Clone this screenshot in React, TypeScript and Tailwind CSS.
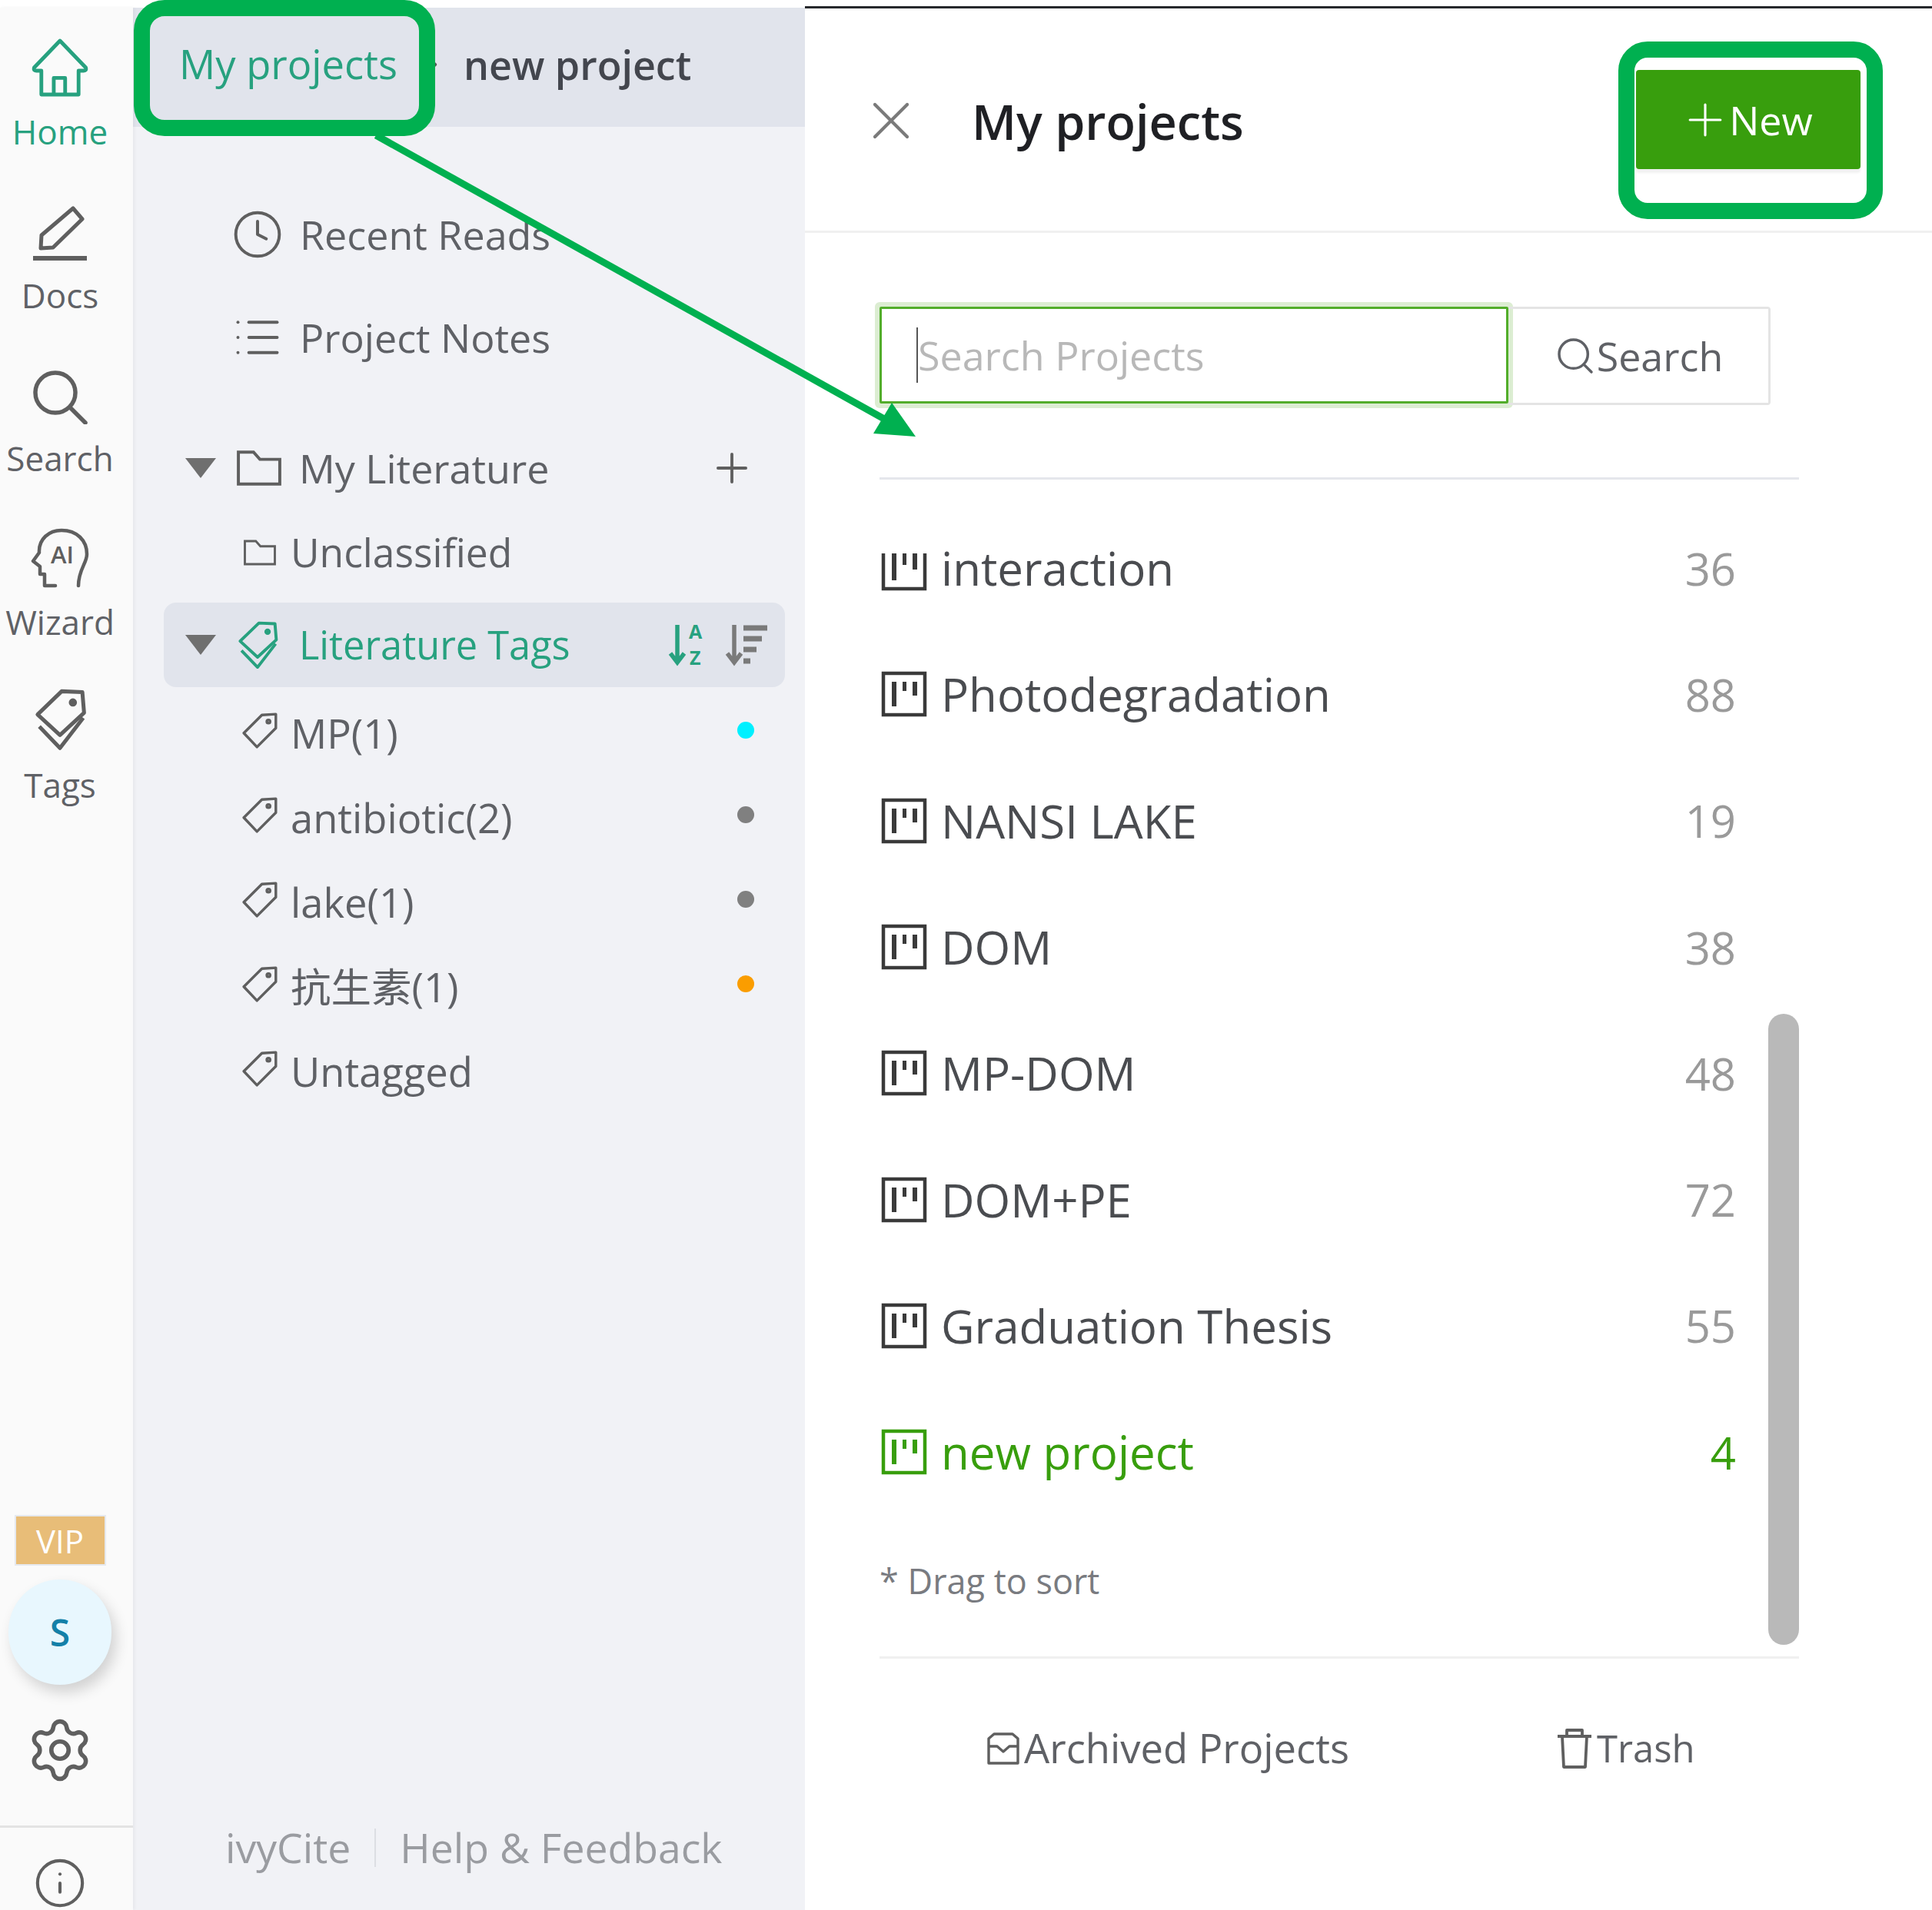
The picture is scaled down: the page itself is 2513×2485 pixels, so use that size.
import { ChevronRight, Clock, Info, List, Plus, Search, Settings, X } from "lucide-react";

const GREEN = "#27a17f";

const tags = [
  { name: "MP(1)", dot: "bg-[#00f0ff]" },
  { name: "antibiotic(2)", dot: "bg-[#808080]" },
  { name: "lake(1)", dot: "bg-[#808080]" },
  { name: "抗生素(1)", dot: "bg-[#fa9d00]" },
  { name: "Untagged", dot: "" },
];

const projects = [
  { name: "interaction", count: 36 },
  { name: "Photodegradation", count: 88 },
  { name: "NANSI LAKE", count: 19 },
  { name: "DOM", count: 38 },
  { name: "MP-DOM", count: 48 },
  { name: "DOM+PE", count: 72 },
  { name: "Graduation Thesis", count: 55 },
  { name: "new project", count: 4, active: true },
];

function HomeIcon() {
  return (
    <svg width="76" height="78" viewBox="0 0 56 58" fill="none" stroke={GREEN} strokeWidth="3.6" strokeLinejoin="round">
      <path d="M28 3 L53 29 Q54 32 51 32 H46 V55 H10 V32 H5 Q2 32 3 29 Z" />
      <path d="M22 55 V39 H33 V55" />
    </svg>
  );
}

function DocsIcon() {
  return (
    <svg width="72" height="72" viewBox="0 0 72 72" fill="none" stroke="#5f5f5f" strokeWidth="5" strokeLinejoin="round">
      <path d="M53 3 L65 17 L27 54 L11 55 L12 38 Z" />
      <path d="M1 68 H71" strokeWidth="6" />
    </svg>
  );
}

function SearchIcon() {
  return (
    <svg width="72" height="72" viewBox="0 0 72 72" fill="none" stroke="#5f5f5f" strokeWidth="5.5" strokeLinecap="round">
      <circle cx="30" cy="31" r="26" />
      <path d="M50 51 L69 70" />
    </svg>
  );
}

function WizardIcon() {
  return (
    <svg width="76" height="78" viewBox="0 0 76 78" fill="none" stroke="#5f5f5f" strokeWidth="4.5" strokeLinejoin="round" strokeLinecap="round">
      <path d="M32 75 H18 V60 H12 V50 L3 43 L11 32 C10 14 24 3 40 3 C60 3 73 16 73 34 C73 46 62 54 62 75" />
      <text x="26" y="46" fontSize="31" fontWeight="600" fill="#5f5f5f" stroke="none">AI</text>
    </svg>
  );
}

function DoubleTag({ color, size = 72 }: { color: string; size?: number }) {
  return (
    <svg width={size} height={size * 1.12} viewBox="0 0 64 72" fill="none" stroke={color} strokeWidth="4.5" strokeLinejoin="round">
      <path d="M34 3 L58 4 L60 28 L32 54 L6 30 Z" />
      <circle cx="47" cy="16" r="2.5" fill={color} />
      <path d="M8 44 L32 69 L59 34" />
    </svg>
  );
}

function TagIcon() {
  return (
    <svg width="47" height="47" viewBox="0 0 44 44" fill="none" stroke="#5f5f5f" strokeWidth="3.2" strokeLinejoin="round">
      <path d="M24 3 L41 2 L41 19 L18 42 L2 25 Z" />
      <circle cx="32" cy="11" r="2" />
    </svg>
  );
}

function FolderIcon({ w, h }: { w: number; h: number }) {
  return (
    <svg width={w} height={h} viewBox="0 0 56 44" fill="none" stroke="#5f5f5f" strokeWidth="3.8" strokeLinejoin="miter">
      <path d="M2 42 V2 H21 L29 11 H54 V42 Z" />
    </svg>
  );
}

function Caret() {
  return (
    <svg width="40" height="28" viewBox="0 0 40 28" fill="#6f6f6f">
      <path d="M0 1 H40 L20 27 Z" />
    </svg>
  );
}

function ProjectIcon({ active, clipped }: { active?: boolean; clipped?: boolean }) {
  const color = active ? "#389e0d" : "#3a3a3a";
  return (
    <svg width="60" height="60" viewBox="0 0 60 60" fill="none" stroke={color} strokeWidth="4.5" strokeLinejoin="miter">
      {clipped ? <path d="M3 11 V57 H57 V11" /> : <rect x="3" y="3" width="54" height="54" />}
      <g stroke="none" fill={color}>
        <rect x="14" y={clipped ? 11 : 14} width="6" height={clipped ? 35 : 32} />
        <rect x="28" y={clipped ? 11 : 14} width="5" height={clipped ? 15 : 12} />
        <rect x="41" y={clipped ? 11 : 14} width="6" height={clipped ? 21 : 18} />
      </g>
    </svg>
  );
}

function SortAz() {
  return (
    <svg width="52" height="70" viewBox="0 -6 52 70" fill="none" stroke={GREEN}>
      <path d="M12 3 V50 M3 40 L12 52 L21 40" strokeWidth="5.5" />
      <text x="27" y="21" fontSize="25" fontWeight="700" fill={GREEN} stroke="none">A</text>
      <text x="28" y="55" fontSize="25" fontWeight="700" fill={GREEN} stroke="none">Z</text>
    </svg>
  );
}

function SortBars() {
  return (
    <svg width="56" height="58" viewBox="0 0 56 58" fill="none" stroke="#7a7a7a">
      <path d="M12 3 V50 M3 40 L12 52 L21 40" strokeWidth="5.5" />
      <path d="M24 7 H55 M24 21 H48 M24 35 H41 M24 50 H33" strokeWidth="7" />
    </svg>
  );
}

function ArchiveIcon() {
  return (
    <svg width="42" height="42" viewBox="0 0 42 42" fill="none" stroke="#5f5f5f" strokeWidth="3.4" strokeLinejoin="round">
      <path d="M2 40 V8 L9 2 H33 L40 8 V40 Z" />
      <path d="M2 18 H13 L21 25 L29 18 H40" />
    </svg>
  );
}

function TrashIcon() {
  return (
    <svg width="46" height="54" viewBox="0 0 46 54" fill="none" stroke="#5f5f5f" strokeWidth="3.8" strokeLinejoin="round">
      <path d="M7 11 L9 51 H37 L39 11" />
      <path d="M1 11 H45" />
      <path d="M13 11 V3 H33 V11" />
    </svg>
  );
}

function RailItem({ icon, label, active }: { icon: React.ReactNode; label: string; active?: boolean }) {
  return (
    <div className={`h-[212.5px] flex flex-col items-center pr-[17px] ${active ? "text-[#27a17f]" : "text-[#5f6166]"}`}>
      <div className="h-[92px] flex items-end justify-center">{icon}</div>
      <span className="mt-[14px] text-[44px] leading-[60px]">{label}</span>
    </div>
  );
}

export default function App() {
  return (
    <div className="relative flex w-[2513px] h-[2485px] overflow-hidden bg-white font-[family-name:'Open_Sans','Noto_Sans_CJK_SC',sans-serif]">
      {/* Icon rail */}
      <aside className="w-[173px] mt-[10px] shrink-0 bg-[#fafafa] flex flex-col shadow-[2px_0_4px_rgba(0,0,0,0.05)] z-10">
        <div className="pt-[25px]">
          <RailItem active icon={<HomeIcon />} label="Home" />
          <RailItem icon={<DocsIcon />} label="Docs" />
          <RailItem icon={<SearchIcon />} label="Search" />
          <RailItem icon={<WizardIcon />} label="Wizard" />
          <RailItem icon={<DoubleTag color="#5f5f5f" />} label="Tags" />
        </div>
        <div className="mt-auto flex flex-col items-center">
          <div className="mr-[17px] w-[119px] h-[66px] bg-[#e8bd78] border-2 border-[#e6e9ee] flex items-center justify-center text-[42px] text-white">
            VIP
          </div>
          <div className="mr-[17px] mt-[18px] w-[134px] h-[137px] rounded-full bg-[#e8f7fe] shadow-[6px_10px_18px_rgba(0,0,0,0.16)] flex items-center justify-center text-[48px] font-semibold text-[#1480a8]">
            S
          </div>
          <Settings className="mr-[17px] mt-[40px] text-[#5f5f5f]" size={90} strokeWidth={1.5} />
          <div className="mt-[53px] w-full border-t-[3px] border-[#e3e3e3] h-[110px] flex items-start justify-center pt-[37px] pr-[17px]">
            <Info className="text-[#5f5f5f]" size={70} strokeWidth={1.4} />
          </div>
        </div>
      </aside>

      {/* Middle panel */}
      <section className="w-[874px] mt-[10px] shrink-0 bg-[#f1f2f6] flex flex-col">
        <div className="h-[155px] bg-[#e1e4ec] flex items-center text-[52.5px] pl-[60px] pb-[8px]">
          <span className="text-[#27a17f]">My projects</span>
          <ChevronRight size={28} strokeWidth={3} className="ml-[32px] text-[#555]" />
          <span className="ml-[26px] text-[52px] text-[#43464e] font-semibold">new project</span>
        </div>

        <div className="mt-[73px] text-[#5f6166] text-[52px]">
          <div className="h-[134px] flex items-center pl-[128px] gap-[21px]">
            <Clock size={68} strokeWidth={1.4} className="text-[#5f5f5f]" />
            <span>Recent Reads</span>
          </div>
          <div className="h-[134px] flex items-center pl-[128px] gap-[21px]">
            <List size={68} strokeWidth={1.4} className="text-[#5f5f5f]" />
            <span>Project Notes</span>
          </div>
          <div className="mt-[48px] h-[110px] flex items-center pl-[68px] pr-[64px]">
            <Caret />
            <span className="ml-[27px]"><FolderIcon w={58} h={46} /></span>
            <span className="ml-[23px]">My Literature</span>
            <Plus size={62} strokeWidth={1.5} className="ml-auto text-[#5f5f5f]" />
          </div>
          <div className="h-[110px] flex items-center pl-[144px] gap-[19px]">
            <FolderIcon w={42} h={34} />
            <span className="text-[51.5px]">Unclassified</span>
          </div>
          <div className="mt-[10px] ml-[40px] w-[808px] h-[110px] rounded-[16px] bg-[#e1e4ec] flex items-center pl-[28px] pr-[22px] text-[#27a17f]">
            <Caret />
            <span className="ml-[26px]"><DoubleTag color={GREEN} size={56} /></span>
            <span className="ml-[26px] text-[50.5px]">Literature Tags</span>
            <span className="ml-auto"><SortAz /></span>
            <span className="ml-[22px]"><SortBars /></span>
          </div>
          <div className="mt-[5px]">
            {tags.map((tag) => (
              <div key={tag.name} className="h-[110px] flex items-center pl-[142px] pr-[66px]">
                <span className="-mt-[8px]"><TagIcon /></span>
                <span className="ml-[16px] text-[52.5px]">{tag.name}</span>
                {tag.dot && <span className={`ml-auto -mt-[8px] w-[22px] h-[22px] rounded-full ${tag.dot}`} />}
              </div>
            ))}
          </div>
        </div>

        <div className="mt-auto mb-[41px] pl-[120px] flex items-center text-[53.5px] text-[#9a9ca1]">
          <span>ivyCite</span>
          <span className="mx-[31px] h-[50px] border-l-2 border-[#dcdee3]" />
          <span>Help &amp; Feedback</span>
        </div>
      </section>

      {/* Projects panel */}
      <main className="flex-1 mt-[8px] border-t-[3px] border-[#26282c] flex flex-col text-[#4a4c50]">
        <header className="h-[292px] border-b-[3px] border-[#f0f0f0] flex items-center pl-[70px] pr-[93px]">
          <X size={84} strokeWidth={1.2} className="mt-[3px] text-[#7a7a7a]" />
          <h1 className="ml-[63px] mt-[5px] text-[63px] font-semibold text-[#1f2024]">My projects</h1>
          <button className="ml-auto mt-0 w-[292px] h-[129px] rounded-[4px] bg-[#389e0d] shadow-[0_5px_3px_rgba(0,0,0,0.06)] flex items-center justify-center pr-[6px] text-[52px] text-white">
            <Plus size={68} strokeWidth={1.1} className="-mr-[6px]" />
            <span className="ml-[3px]">New</span>
          </button>
        </header>

        <div className="ml-[97px] w-[1196px] flex flex-col flex-1">
          <div className="mt-[96px] flex h-[128px]">
            <div className="w-[818px] h-[126px] border-[3px] border-[#52ad2a] shadow-[0_0_0_6px_#dcedd2] rounded-[2px] flex items-center pl-[45px] text-[52px] text-[#b8b8b8]">
              <span className="border-l-2 border-[#555] leading-[72px]">Search Projects</span>
            </div>
            <div className="w-[341px] h-[128px] border-[3px] border-l-0 border-[#e4e4e4] rounded-r-[4px] flex items-center justify-center text-[52px] text-[#5f6166]">
              <Search size={56} strokeWidth={1.5} />
              <span>Search</span>
            </div>
          </div>
          <div className="mt-[94px] border-t-[3px] border-[#e5e7ec]" />

          <div className="relative pt-[33px]">
            {projects.map((p, i) => (
              <div
                key={p.name}
                className={`h-[164.3px] flex items-center pl-[2px] pr-[82px] text-[60px] ${p.active ? "text-[#389e0d]" : ""}`}
              >
                <ProjectIcon active={p.active} clipped={i === 0} />
                <span className="ml-[18px]">{p.name}</span>
                <span className={`ml-auto text-[58px] ${p.active ? "" : "text-[#9a9a9a]"}`}>{p.count}</span>
              </div>
            ))}
            <div className="mt-[35px] h-[100px] flex items-center text-[45px] text-[#797b80]">* Drag to sort</div>
            <div className="absolute right-0 top-[695px] w-[40px] h-[821px] rounded-full bg-[#b9b9b9]" />
          </div>
          <div className="mt-[49px] border-t-[3px] border-[#f0f0f0]" />

          <div className="mt-[77px] flex items-center text-[52px] text-[#5f6166]">
            <span className="ml-[140px]"><ArchiveIcon /></span>
            <span className="ml-[6px] text-[52.5px]">Archived Projects</span>
            <span className="ml-[270px]"><TrashIcon /></span>
            <span className="ml-[6px] text-[49px]">Trash</span>
          </div>
        </div>
      </main>

      {/* Annotation overlay */}
      <div className="absolute left-[174px] top-0 w-[392px] h-[177px] rounded-[40px] border-[21px] border-[#00b050] z-20" />
      <div className="absolute left-[2105px] top-[54px] w-[344px] h-[231px] rounded-[38px] border-[21px] border-[#00b050] z-20" />
      <svg className="absolute left-0 top-0 z-20 pointer-events-none" width="2513" height="2485" fill="#00b050">
        <path d="M489 176 L1150 545" stroke="#00b050" strokeWidth="9" />
        <path d="M1191 568 L1160 524 L1136 564 Z" />
      </svg>
    </div>
  );
}
